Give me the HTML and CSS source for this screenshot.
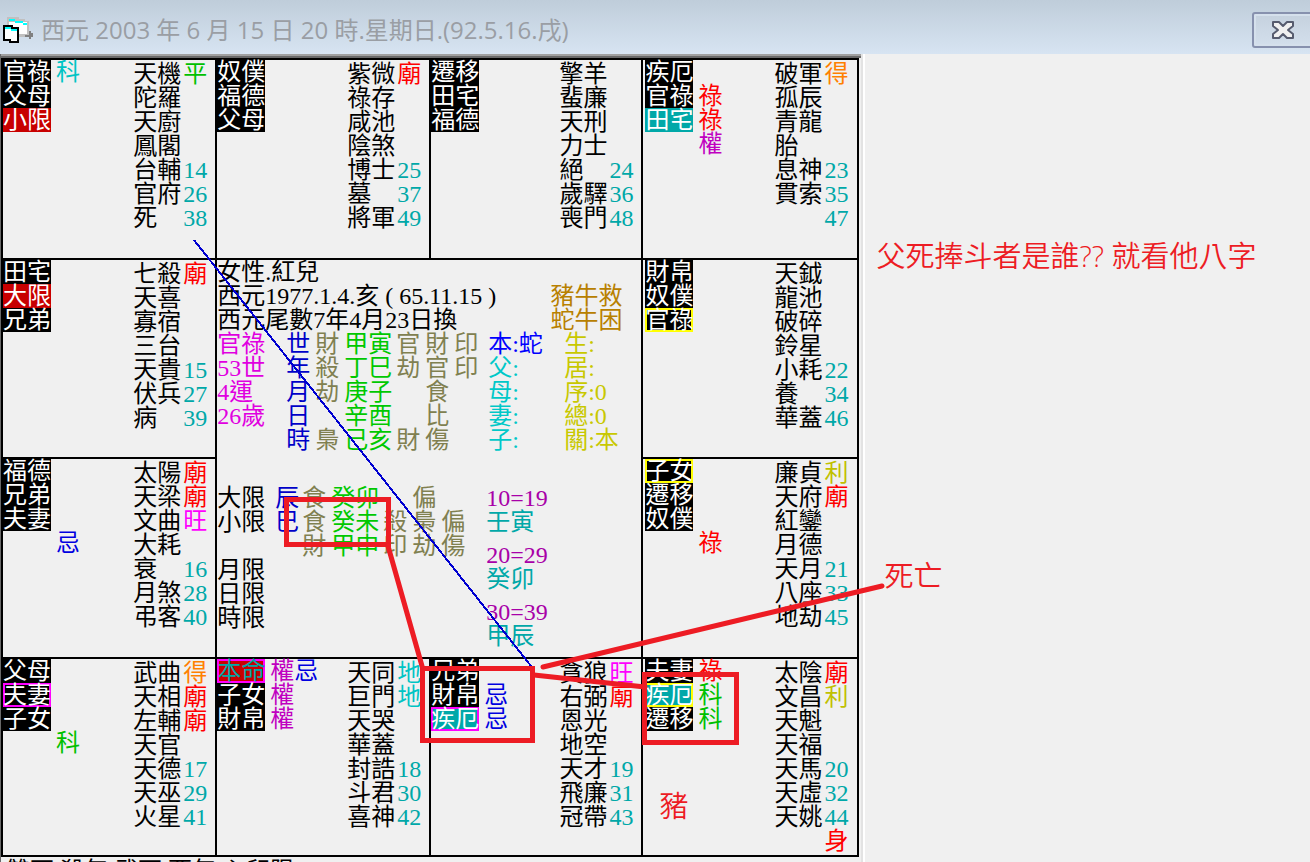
FILE: index.html
```html
<!DOCTYPE html>
<html lang="zh-Hant">
<head>
    <meta charset="UTF-8">
    <title>西元 2003 年 6 月 15 日 20 時</title>
    <meta name="viewport" content="width=device-width, initial-scale=1.0">

    <link rel="stylesheet" href="styles.css">
</head>
<body>

<header class="titlebar">
    <svg class="app-icon" viewBox="0 0 30 26" shape-rendering="crispEdges">
        <path d="M4 0h12v2h6v2h4v14h-4v2H4z" fill="#c0c0c0"/>
        <path d="M6 5h18v12H6z" fill="#fff"/>
        <path d="M6 2h6v2H6zM12 4h8v2h-8zM20 6h4v2h-4z" fill="#0ff"/>
        <path d="M26 14h2v2h2v4h-2v2h-2v-2h-4v-2h4z" fill="#808080"/>
        <path d="M0 8h10v2h6v16H6v-2H0z" fill="#000"/>
        <path d="M2 12h6v2h6v10H8v-2H2z" fill="#fff"/>
        <path d="M2 10h6v2H2zM8 12h6v2H8z" fill="#0ff"/>
    </svg>
    <h1>西元 2003 年 6 月 15 日 20 時.星期日.(92.5.16.戌)</h1>
    <button class="close" aria-label="關閉">
        <svg viewBox="0 0 22 18">
            <path d="M1 1h6l4 4 4-4h6v4l-5 4 5 4v4h-6l-4-4-4 4H1v-4l5-4-5-4z" fill="#f0f0f0" stroke="#565b6e" stroke-width="2" stroke-linejoin="round"/>
        </svg>
    </button>
</header>

<main class="workspace">
    <div class="window">
        <div class="board">
            <section class="palace">
                <ul class="tags">
                    <li><b>官祿</b><i class="cyan">科</i></li>
                    <li><b>父母</b></li>
                    <li><b class="on-red">小限</b></li>
                </ul>
                <ul class="stars">
                    <li>天機<i class="green">平</i></li>
                    <li>陀羅</li>
                    <li>天廚</li>
                    <li>鳳閣</li>
                    <li>台輔<i>14</i></li>
                    <li>官府<i>26</i></li>
                    <li>死<i>38</i></li>
                </ul>
            </section>

            <section class="palace">
                <ul class="tags">
                    <li><b>奴僕</b></li>
                    <li><b>福德</b></li>
                    <li><b>父母</b></li>
                </ul>
                <ul class="stars">
                    <li>紫微<i class="red">廟</i></li>
                    <li>祿存</li>
                    <li>咸池</li>
                    <li>陰煞</li>
                    <li>博士<i>25</i></li>
                    <li>墓<i>37</i></li>
                    <li>將軍<i>49</i></li>
                </ul>
            </section>

            <section class="palace">
                <ul class="tags">
                    <li><b>遷移</b></li>
                    <li><b>田宅</b></li>
                    <li><b>福德</b></li>
                </ul>
                <ul class="stars">
                    <li>擎羊</li>
                    <li>蜚廉</li>
                    <li>天刑</li>
                    <li>力士</li>
                    <li>絕<i>24</i></li>
                    <li>歲驛<i>36</i></li>
                    <li>喪門<i>48</i></li>
                </ul>
            </section>

            <section class="palace last">
                <ul class="tags">
                    <li><b>疾厄</b></li>
                    <li><b>官祿</b><i class="red">祿</i></li>
                    <li><b class="on-teal">田宅</b><i class="red">祿</i></li>
                    <li class="bare"><i class="purple">權</i></li>
                </ul>
                <ul class="stars">
                    <li>破軍<i class="orange">得</i></li>
                    <li>孤辰</li>
                    <li>青龍</li>
                    <li>胎</li>
                    <li>息神<i>23</i></li>
                    <li>貫索<i>35</i></li>
                    <li><i>47</i></li>
                </ul>
            </section>

            <section class="palace">
                <ul class="tags">
                    <li><b>田宅</b></li>
                    <li><b class="on-red">大限</b></li>
                    <li><b>兄弟</b></li>
                </ul>
                <ul class="stars">
                    <li>七殺<i class="red">廟</i></li>
                    <li>天喜</li>
                    <li>寡宿</li>
                    <li>三台</li>
                    <li>天貴<i>15</i></li>
                    <li>伏兵<i>27</i></li>
                    <li>病<i>39</i></li>
                </ul>
            </section>

            <section class="center">
                <div class="person">
                    <div>
                        <p>女性.紅兒</p>
                        <p>西元1977.1.4.亥 ( 65.11.15 )</p>
                        <p>西元尾數7年4月23日換</p>
                    </div>
                    <div class="fate">
                        <p>豬牛救</p>
                        <p>蛇牛困</p>
                    </div>
                </div>

                <div class="birth">
                    <div class="now">
                        <p>官祿</p>
                        <p>53世</p>
                        <p>4運</p>
                        <p>26歲</p>
                    </div>
                    <table class="pillars">
                        <tr><th>世</th><td>財</td><td class="stem">甲寅</td><td>官</td><td>財</td><td>印</td></tr>
                        <tr><th>年</th><td>殺</td><td class="stem">丁巳</td><td>劫</td><td>官</td><td>印</td></tr>
                        <tr><th>月</th><td>劫</td><td class="stem">庚子</td><td></td><td>食</td><td></td></tr>
                        <tr><th>日</th><td></td><td class="stem">辛酉</td><td></td><td>比</td><td></td></tr>
                        <tr><th>時</th><td>梟</td><td class="stem">己亥</td><td>財</td><td>傷</td><td></td></tr>
                    </table>
                    <div class="kin">
                        <p class="self">本:蛇</p>
                        <p>父:</p>
                        <p>母:</p>
                        <p>妻:</p>
                        <p>子:</p>
                    </div>
                    <div class="notes">
                        <p>生:</p>
                        <p>居:</p>
                        <p>序:0</p>
                        <p>總:0</p>
                        <p>關:本</p>
                    </div>
                </div>

                <div class="limits">
                    <table class="pillars">
                        <tr><td class="limit">大限</td><th>辰</th><td>食</td><td class="stem">癸卯</td><td></td><td>偏</td><td></td></tr>
                        <tr><td class="limit">小限</td><th>巳</th><td>食</td><td class="stem">癸未</td><td>殺</td><td>梟</td><td>偏</td></tr>
                        <tr><td class="limit"></td><th></th><td>財</td><td class="stem">甲申</td><td>印</td><td>劫</td><td>傷</td></tr>
                        <tr><td class="limit">月限</td></tr>
                        <tr><td class="limit">日限</td></tr>
                        <tr><td class="limit">時限</td></tr>
                    </table>
                    <dl class="decades">
                        <dt>10=19</dt><dd>壬寅</dd>
                        <dt>20=29</dt><dd>癸卯</dd>
                        <dt>30=39</dt><dd>甲辰</dd>
                    </dl>
                </div>
            </section>

            <section class="palace last">
                <ul class="tags">
                    <li><b>財帛</b></li>
                    <li><b>奴僕</b></li>
                    <li><b class="box-yellow">官祿</b></li>
                </ul>
                <ul class="stars">
                    <li>天鉞</li>
                    <li>龍池</li>
                    <li>破碎</li>
                    <li>鈴星</li>
                    <li>小耗<i>22</i></li>
                    <li>養<i>34</i></li>
                    <li>華蓋<i>46</i></li>
                </ul>
            </section>

            <section class="palace">
                <ul class="tags">
                    <li><b>福德</b></li>
                    <li><b>兄弟</b></li>
                    <li><b>夫妻</b></li>
                    <li class="bare"><i class="blue">忌</i></li>
                </ul>
                <ul class="stars">
                    <li>太陽<i class="red">廟</i></li>
                    <li>天梁<i class="red">廟</i></li>
                    <li>文曲<i class="pink">旺</i></li>
                    <li>大耗</li>
                    <li>衰<i>16</i></li>
                    <li>月煞<i>28</i></li>
                    <li>弔客<i>40</i></li>
                </ul>
            </section>

            <section class="palace last">
                <ul class="tags">
                    <li><b class="box-yellow">子女</b></li>
                    <li><b>遷移</b></li>
                    <li><b>奴僕</b></li>
                    <li class="bare"><i class="red">祿</i></li>
                </ul>
                <ul class="stars">
                    <li>廉貞<i class="yellow">利</i></li>
                    <li>天府<i class="red">廟</i></li>
                    <li>紅鑾</li>
                    <li>月德</li>
                    <li>天月<i>21</i></li>
                    <li>八座<i>33</i></li>
                    <li>地劫<i>45</i></li>
                </ul>
            </section>

            <section class="palace">
                <ul class="tags">
                    <li><b>父母</b></li>
                    <li><b class="box-pink">夫妻</b></li>
                    <li><b>子女</b></li>
                    <li class="bare"><i class="green">科</i></li>
                </ul>
                <ul class="stars">
                    <li>武曲<i class="orange">得</i></li>
                    <li>天相<i class="red">廟</i></li>
                    <li>左輔<i class="red">廟</i></li>
                    <li>天官</li>
                    <li>天德<i>17</i></li>
                    <li>天巫<i>29</i></li>
                    <li>火星<i>41</i></li>
                </ul>
            </section>

            <section class="palace">
                <ul class="tags">
                    <li><b class="on-red box-pink life">本命</b><i class="purple">權</i><i class="blue">忌</i></li>
                    <li><b>子女</b><i class="purple">權</i></li>
                    <li><b>財帛</b><i class="purple">權</i></li>
                </ul>
                <ul class="stars">
                    <li>天同<i class="cyan">地</i></li>
                    <li>巨門<i class="cyan">地</i></li>
                    <li>天哭</li>
                    <li>華蓋</li>
                    <li>封誥<i>18</i></li>
                    <li>斗君<i>30</i></li>
                    <li>喜神<i>42</i></li>
                </ul>
            </section>

            <section class="palace">
                <ul class="tags">
                    <li><b>兄弟</b></li>
                    <li><b>財帛</b><i class="blue">忌</i></li>
                    <li><b class="on-teal box-pink">疾厄</b><i class="blue">忌</i></li>
                </ul>
                <ul class="stars">
                    <li>貪狼<i class="pink">旺</i></li>
                    <li>右弼<i class="red">廟</i></li>
                    <li>恩光</li>
                    <li>地空</li>
                    <li>天才<i>19</i></li>
                    <li>飛廉<i>31</i></li>
                    <li>冠帶<i>43</i></li>
                </ul>
            </section>

            <section class="palace last">
                <ul class="tags">
                    <li><b>夫妻</b><i class="red">祿</i></li>
                    <li><b class="on-teal box-yellow">疾厄</b><i class="green">科</i></li>
                    <li><b>遷移</b><i class="green">科</i></li>
                </ul>
                <ul class="stars">
                    <li>太陰<i class="red">廟</i></li>
                    <li>文昌<i class="yellow">利</i></li>
                    <li>天魁</li>
                    <li>天福</li>
                    <li>天馬<i>20</i></li>
                    <li>天虛<i>32</i></li>
                    <li>天姚<i>44</i></li>
                    <li><i class="red">身</i></li>
                </ul>
                <span class="remark pig">豬</span>
            </section>
        </div>
        <p class="status">雙西.殺年.武西.酉年.心印限</p>
    </div>

    <aside class="remarks">
        <p class="remark">父死捧斗者是誰?? 就看他八字</p>
        <p class="remark">死亡</p>
    </aside>

    <svg class="marks" viewBox="0 0 1310 808" preserveAspectRatio="none" fill="none" stroke="#ed1c24" stroke-width="5">
        <path d="M194 186L531 612" stroke="#0000d0" stroke-width="2" shape-rendering="crispEdges"/>
        <g shape-rendering="crispEdges">
            <rect x="286" y="445" width="102" height="45"/>
            <rect x="422" y="614" width="110" height="72"/>
            <rect x="644" y="620" width="92" height="68"/>
        </g>
        <path d="M388 492L422 612M534 621L645 633M543 613L882 532" stroke-linecap="round"/>
    </svg>
</main>

</body>
</html>
```
FILE: styles.css
```css
* {
    box-sizing: border-box;
    margin: 0;
    padding: 0;
}

body {
    height: 100vh;
    display: flex;
    flex-direction: column;
    background: #f0f0f0;
    color: black;
    font-family: "Liberation Serif", "Noto Sans CJK TC", serif;
    font-size: 24px;
    line-height: 24px;
    overflow: hidden;
}

ul {
    list-style: none;
}

i {
    font-style: normal;
}

/* title bar */

.titlebar {
    display: flex;
    flex: none;
    align-items: center;
    height: 54px;
    padding: 6px 0 0 3px;
    background: linear-gradient(#bfcdda, #d7e4f2);
    overflow: hidden;
}

.app-icon {
    width: 30px;
    height: 26px;
}

.titlebar h1 {
    flex: 1;
    margin-left: 8px;
    color: #9a9ea4;
    font-family: "Open Sans", "Noto Sans CJK TC", sans-serif;
    font-size: 24px;
    font-weight: 400;
    white-space: nowrap;
}

.close {
    width: 62px;
    height: 36px;
    margin-right: -4px;
    border: 2px solid #8791ae;
    border-radius: 3px;
    background: linear-gradient(#c5d1de, #d3dfec);
    box-shadow: inset 0 0 0 2px #d5e0ec;
}

.close svg {
    display: block;
    width: 22px;
    height: 18px;
    margin: auto;
}

/* chart window */

.workspace {
    position: relative;
    display: flex;
    flex: 1;
    min-height: 0;
    overflow: hidden;
}

.window {
    width: 66%;
    border-left: 1px solid #696969;
    border-right: 2px solid white;
    box-shadow: inset -2px 0 #e3e3e3, inset 0 2px #a0a0a0, inset 0 4px #696969;
    padding: 4px 4px 0 0;
}

.board {
    display: grid;
    grid-template-columns: 212fr 212fr 210fr 213fr;
    grid-template-rows: minmax(198px, auto) minmax(197px, auto) minmax(198px, auto) minmax(196px, auto);
    gap: 2px;
    padding: 2px;
    background: black;
}

.palace {
    position: relative;
    display: flex;
    justify-content: space-between;
    padding-right: 8px;
    background: #f0f0f0;
}

.palace.last {
    padding-left: 2px;
}

.tags li {
    display: flex;
    height: 24px;
}

.tags b {
    width: 48px;
    margin-right: 5px;
    background: black;
    color: white;
    font-weight: normal;
}

.tags .bare {
    padding-left: 53px;
}

.tags .on-red {
    background: #c80000;
}

.tags .on-teal {
    background: #00a8a8;
}

.tags .life {
    color: #00a8a8;
}

.box-yellow {
    box-shadow: inset 0 0 0 2px yellow;
}

.box-pink {
    box-shadow: inset 0 0 0 2px magenta;
}

.stars {
    width: 74px;
    padding-top: 2px;
}

.stars li {
    display: flex;
    justify-content: space-between;
    height: 24px;
}

.stars i {
    margin-left: auto;
    color: #00a8a8;
}

.palace .red {
    color: red;
}

.palace .green {
    color: #00c000;
}

.palace .cyan {
    color: #00c4c4;
}

.palace .orange {
    color: #ff8000;
}

.palace .yellow {
    color: #c0c000;
}

.palace .pink {
    color: magenta;
}

.palace .purple {
    color: #c000c0;
}

.palace .blue {
    color: #0000e0;
}

/* middle of the chart */

.center {
    grid-column: 2 / 4;
    grid-row: 2 / 4;
    background: #f0f0f0;
    white-space: nowrap;
}

.person {
    display: flex;
    justify-content: space-between;
    padding-right: 19px;
}

.fate {
    padding-top: 24px;
    color: #b88000;
}

.birth {
    display: flex;
}

.now {
    width: 69px;
    color: #e000e0;
}

.pillars {
    border-collapse: collapse;
}

.pillars th,
.pillars td {
    width: 29px;
    height: 24px;
    color: #808050;
    font-weight: normal;
    text-align: left;
}

.pillars th {
    color: #0000c8;
}

.pillars .stem {
    width: 52px;
    color: #00c800;
}

.pillars .limit {
    width: 58px;
    color: black;
}

.birth .pillars {
    margin-right: 5px;
}

.kin {
    width: 76px;
    color: #00c8c8;
}

.kin .self {
    color: blue;
}

.notes {
    color: #c8c800;
}

.limits {
    display: flex;
    align-items: flex-start;
    margin-top: 34px;
}

.limits .pillars {
    margin-right: 16px;
}

.limits .pillars th {
    width: 27px;
}

.decades dt {
    color: #a800a8;
}

.decades dd {
    margin-bottom: 9px;
    color: #00a8a8;
}

.status {
    padding: 2px 5px;
    white-space: nowrap;
}

/* hand-written remarks */

.remarks {
    flex: 1;
    padding: 187px 0 0 12px;
}

.remark {
    color: #ed1c24;
    font-family: "Open Sans", "Noto Sans CJK TC", sans-serif;
    font-size: 29px;
    font-weight: 350;
    line-height: 30px;
    white-space: nowrap;
}

.remarks .remark + .remark {
    margin: 290px 0 0 8px;
}

.pig {
    position: absolute;
    left: 16px;
    bottom: 34px;
}

.marks {
    position: absolute;
    inset: 0;
    width: 100%;
    height: 100%;
    pointer-events: none;
}
```
